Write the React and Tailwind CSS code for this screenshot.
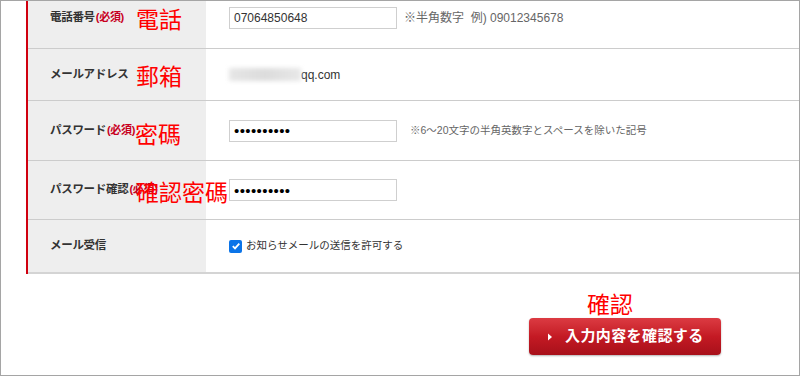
import React from "react";

const jp = { fontFamily: '"Liberation Sans", "Noto Sans CJK JP", sans-serif' };
const tc = { fontFamily: '"Noto Sans CJK TC", sans-serif' };

const Required = () => (
  <span className="text-[#c8001e] text-[11px] font-bold ml-[1px]">(必須)</span>
);

const Row = ({ label, children, className }) => (
  <div className={`flex border-b border-[#cccccc] ${className}`}>
    <div className="w-[178px] shrink-0 bg-[#eeeeee] flex items-center pl-[22px] text-[11.5px] font-bold text-[#333] tracking-[-0.3px]">
      {label}
    </div>
    <div className="flex-1 flex items-center pl-[23px]">{children}</div>
  </div>
);

const Input = ({ value, password }) => (
  <div className="w-[168px] h-[22px] border border-[#cfcfcf] bg-white flex items-center px-[4px]">
    {password ? (
      <span className="text-[15px] leading-none text-black tracking-[0.4px]">••••••••••</span>
    ) : (
      <span className="text-[12px] text-[#333]">{value}</span>
    )}
  </div>
);

export default function App() {
  return (
    <div
      className="w-[800px] h-[376px] border border-[#a5a5a5] bg-white overflow-hidden relative"
      style={jp}
    >
      <div className="pl-[25px]">
        <div className="border-l-2 border-[#d0000f]">
          <Row className="h-[61px] -mt-[13px]" label={<span>電話番号<Required /></span>}>
            <Input value="07064850648" />
            <span className="ml-[7px] text-[12px] text-[#666]">※半角数字&nbsp;&nbsp;例) 09012345678</span>
          </Row>
          <Row className="h-[52px]" label="メールアドレス">
            <div className="flex items-center">
              <div className="w-[72px] h-[13px] bg-gradient-to-r from-[#e6e6e6] via-[#dcdcdc] to-[#e8e8e8] blur-[2px]" />
              <span className="text-[12px] text-[#333]">qq.com</span>
            </div>
          </Row>
          <Row className="h-[60px]" label={<span>パスワード<Required /></span>}>
            <Input password />
            <span className="ml-[13px] text-[10.5px] text-[#666]">※6～20文字の半角英数字とスペースを除いた記号</span>
          </Row>
          <Row className="h-[59px]" label={<span>パスワード確認<Required /></span>}>
            <Input password />
          </Row>
          <Row className="h-[54px] border-b-2 border-[#d4d4d4]" label="メール受信">
            <div className="flex items-center gap-[4px]">
              <div className="w-[13px] h-[13px] rounded-[2px] bg-[#0b74e8] flex items-center justify-center">
                <svg width="10" height="10" viewBox="0 0 10 10">
                  <path d="M1.8 5.2 L4 7.4 L8.3 2.6" stroke="white" strokeWidth="1.8" fill="none" />
                </svg>
              </div>
              <span className="text-[10.5px] text-[#333]">お知らせメールの送信を許可する</span>
            </div>
          </Row>
        </div>
      </div>

      <div className="flex justify-end pr-[78px] mt-[44px]">
        <button className="w-[192px] h-[37px] rounded-[4px] bg-gradient-to-b from-[#dc3a42] via-[#c41a24] to-[#a8101a] shadow-[0_1px_2px_rgba(0,0,0,0.3)] flex items-center pl-[18px] text-white">
          <svg width="6" height="8" viewBox="0 0 6 8" className="mr-[12px]">
            <path d="M1 0.5 L5 4 L1 7.5 Z" fill="white" />
          </svg>
          <span className="text-[15px] font-bold tracking-[0.4px]">入力内容を確認する</span>
        </button>
      </div>

      {/* red annotations */}
      <div className="absolute left-[135px] top-[6px] text-[#ff0000] text-[23px] leading-none" style={tc}>電話</div>
      <div className="absolute left-[135px] top-[63px] text-[#ff0000] text-[23px] leading-none" style={tc}>郵箱</div>
      <div className="absolute left-[134px] top-[121px] text-[#ff0000] text-[23px] leading-none" style={tc}>密碼</div>
      <div className="absolute left-[135px] top-[179px] text-[#ff0000] text-[23px] leading-none" style={tc}>確認密碼</div>
      <div className="absolute left-[586px] top-[291px] text-[#ff0000] text-[23px] leading-none" style={tc}>確認</div>
    </div>
  );
}
